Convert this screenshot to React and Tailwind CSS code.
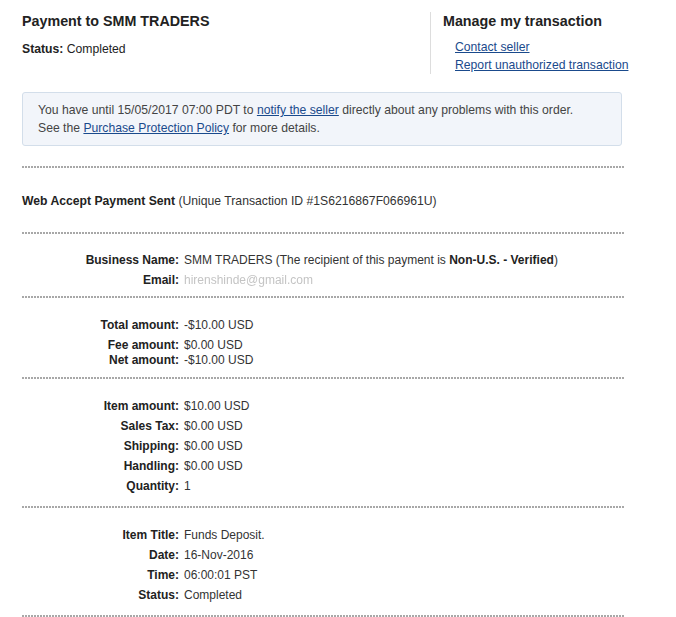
import React from "react";

const font = { fontFamily: '"Liberation Sans", Arial, sans-serif' };

function Dots() {
  return (
    <div className="h-[2px] w-[603px] bg-[repeating-linear-gradient(to_right,#a8a8a8_0,#a8a8a8_2px,transparent_2px,transparent_3px)]" />
  );
}

function Row({ label, children, h = "h-[20px]" }) {
  return (
    <div className={`flex items-center text-[12px] ${h}`}>
      <div className="w-[157px] shrink-0 text-right font-bold text-[#222]">{label}</div>
      <div className="pl-[5px] text-[#333]">{children}</div>
    </div>
  );
}

export default function App() {
  return (
    <div className="min-h-[617px] w-[676px] bg-white text-[12.2px] leading-[18px]" style={font}>
      <div className="pl-[22px]">
        {/* header */}
        <div className="flex pt-[13px]">
          <div className="w-[408px]">
            <div className="text-[14.3px] font-bold leading-[17px] text-[#222]">Payment to SMM TRADERS</div>
            <div className="mt-[10px] text-[#222]">
              <span className="font-bold">Status:</span> Completed
            </div>
          </div>
          <div className="-mt-px h-[62px] border-l border-[#dddddd] pl-[12px]">
            <div className="mt-px text-[14.3px] font-bold leading-[17px] text-[#222]">Manage my transaction</div>
            <div className="mt-[8px] flex flex-col pl-[12px] leading-[18px]">
              <a href="#" className="text-[#1a4a8c] underline">Contact seller</a>
              <a href="#" className="text-[#1a4a8c] underline">Report unauthorized transaction</a>
            </div>
          </div>
        </div>

        {/* notice */}
        <div className="mt-[18px] w-[600px] rounded-[3px] border border-[#d3deea] bg-[#f2f5fa] px-[15px] pt-[8px] pb-[8px] text-[#444]">
          <div>
            You have until 15/05/2017 07:00 PDT to{" "}
            <a href="#" className="text-[#1a4a8c] underline">notify the seller</a> directly about any problems with this order.
          </div>
          <div>
            See the <a href="#" className="text-[#1a4a8c] underline">Purchase Protection Policy</a> for more details.
          </div>
        </div>

        <div className="mt-[20px]"><Dots /></div>

        <div className="flex h-[64px] items-center pt-[1px] text-[#222]">
          <span>
            <span className="font-bold">Web Accept Payment Sent</span>{" "}
            <span className="text-[#333]">(Unique Transaction ID #1S6216867F066961U)</span>
          </span>
        </div>

        <Dots />

        <div className="pt-[16px] pb-[6px]">
          <Row label="Business Name:">
            SMM TRADERS (The recipient of this payment is <span className="font-bold text-[#222]">Non-U.S. - Verified</span>)
          </Row>
          <Row label="Email:">
            <span className="text-[#c4c4c4] blur-[0.6px]">hirenshinde@gmail.com</span>
          </Row>
        </div>

        <Dots />

        <div className="pt-[17px] pb-[12px]">
          <Row label="Total amount:">-$10.00 USD</Row>
          <Row label="Fee amount:">$0.00 USD</Row>
          <Row label="Net amount:" h="h-[10px]">-$10.00 USD</Row>
        </div>

        <Dots />

        <div className="pt-[17px] pb-[10px]">
          <Row label="Item amount:">$10.00 USD</Row>
          <Row label="Sales Tax:">$0.00 USD</Row>
          <Row label="Shipping:">$0.00 USD</Row>
          <Row label="Handling:">$0.00 USD</Row>
          <Row label="Quantity:">1</Row>
        </div>

        <Dots />

        <div className="pt-[17px] pb-[10px]">
          <Row label="Item Title:">Funds Deposit.</Row>
          <Row label="Date:">16-Nov-2016</Row>
          <Row label="Time:">06:00:01 PST</Row>
          <Row label="Status:">Completed</Row>
        </div>

        <Dots />
      </div>
    </div>
  );
}
